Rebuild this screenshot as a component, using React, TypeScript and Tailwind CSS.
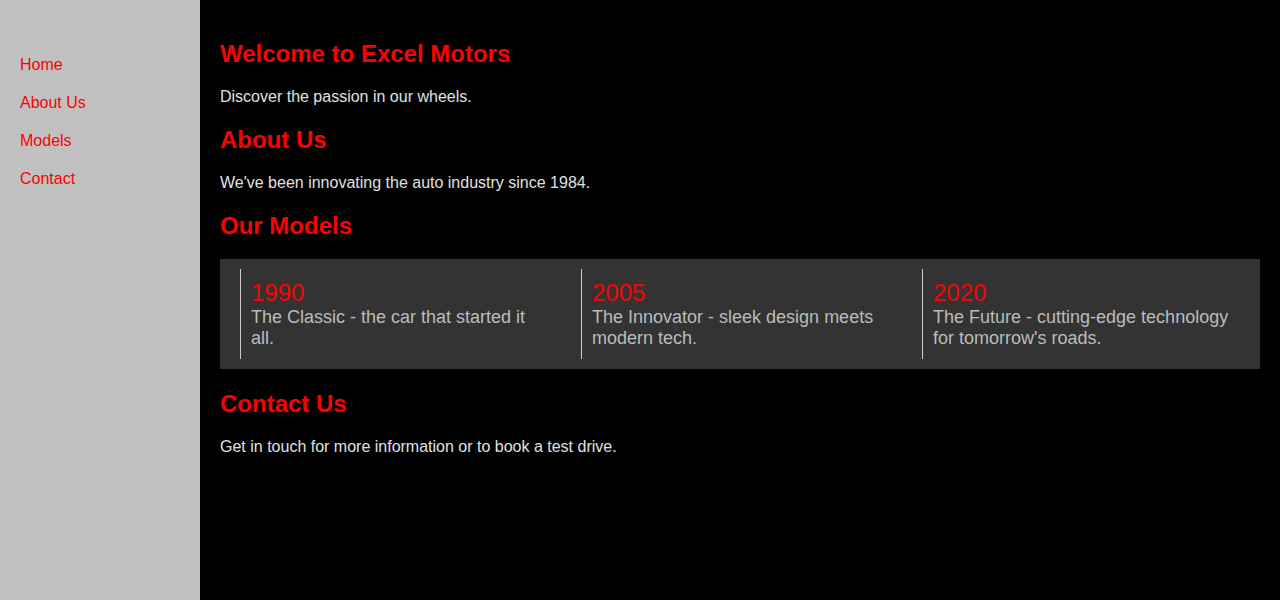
export default function App() {
  const links = ["Home", "About Us", "Models", "Contact"];
  const models = [
    { year: "1990", text: "The Classic - the car that started it all." },
    { year: "2005", text: "The Innovator - sleek design meets modern tech." },
    { year: "2020", text: "The Future - cutting-edge technology for tomorrow's roads." },
  ];
  return (
    <div className="flex min-h-screen bg-black" style={{ fontFamily: '"Liberation Sans", Arial, sans-serif' }}>
      <nav className="w-[200px] shrink-0 bg-[#c0c0c0] p-5">
        <ul className="mt-[26px]">
          {links.map((l) => (
            <li key={l} className="py-[10px] text-[16px] leading-[normal]">
              <a href="#" className="text-[#ff0000]">{l}</a>
            </li>
          ))}
        </ul>
      </nav>
      <main className="min-w-0 flex-1 p-5 text-[#e0e0e0]">
        <h2 className="my-[20px] text-[24px] font-bold leading-[normal] text-[#ff0000]">Welcome to Excel Motors</h2>
        <p className="my-4 text-[16px] leading-[normal]">Discover the passion in our wheels.</p>
        <h2 className="my-[20px] text-[24px] font-bold leading-[normal] text-[#ff0000]">About Us</h2>
        <p className="my-4 text-[16px] leading-[normal]">We've been innovating the auto industry since 1984.</p>
        <h2 className="mt-[20px] mb-[19px] text-[24px] font-bold leading-[normal] text-[#ff0000]">Our Models</h2>
        <div className="flex gap-[20px] bg-[#333333] px-[20px] py-[10px]">
          {models.map((m) => (
            <div key={m.year} className="w-[321px] shrink-0 border-l border-[#cccccc] p-[10px]">
              <div className="text-[24px] leading-[normal] text-[#ff0000]">{m.year}</div>
              <div className="text-[18px] leading-[normal] text-[#bbbbbb]">{m.text}</div>
            </div>
          ))}
        </div>
        <h2 className="mt-[21px] mb-[20px] text-[24px] font-bold leading-[normal] text-[#ff0000]">Contact Us</h2>
        <p className="my-4 text-[16px] leading-[normal]">Get in touch for more information or to book a test drive.</p>
      </main>
    </div>
  );
}
